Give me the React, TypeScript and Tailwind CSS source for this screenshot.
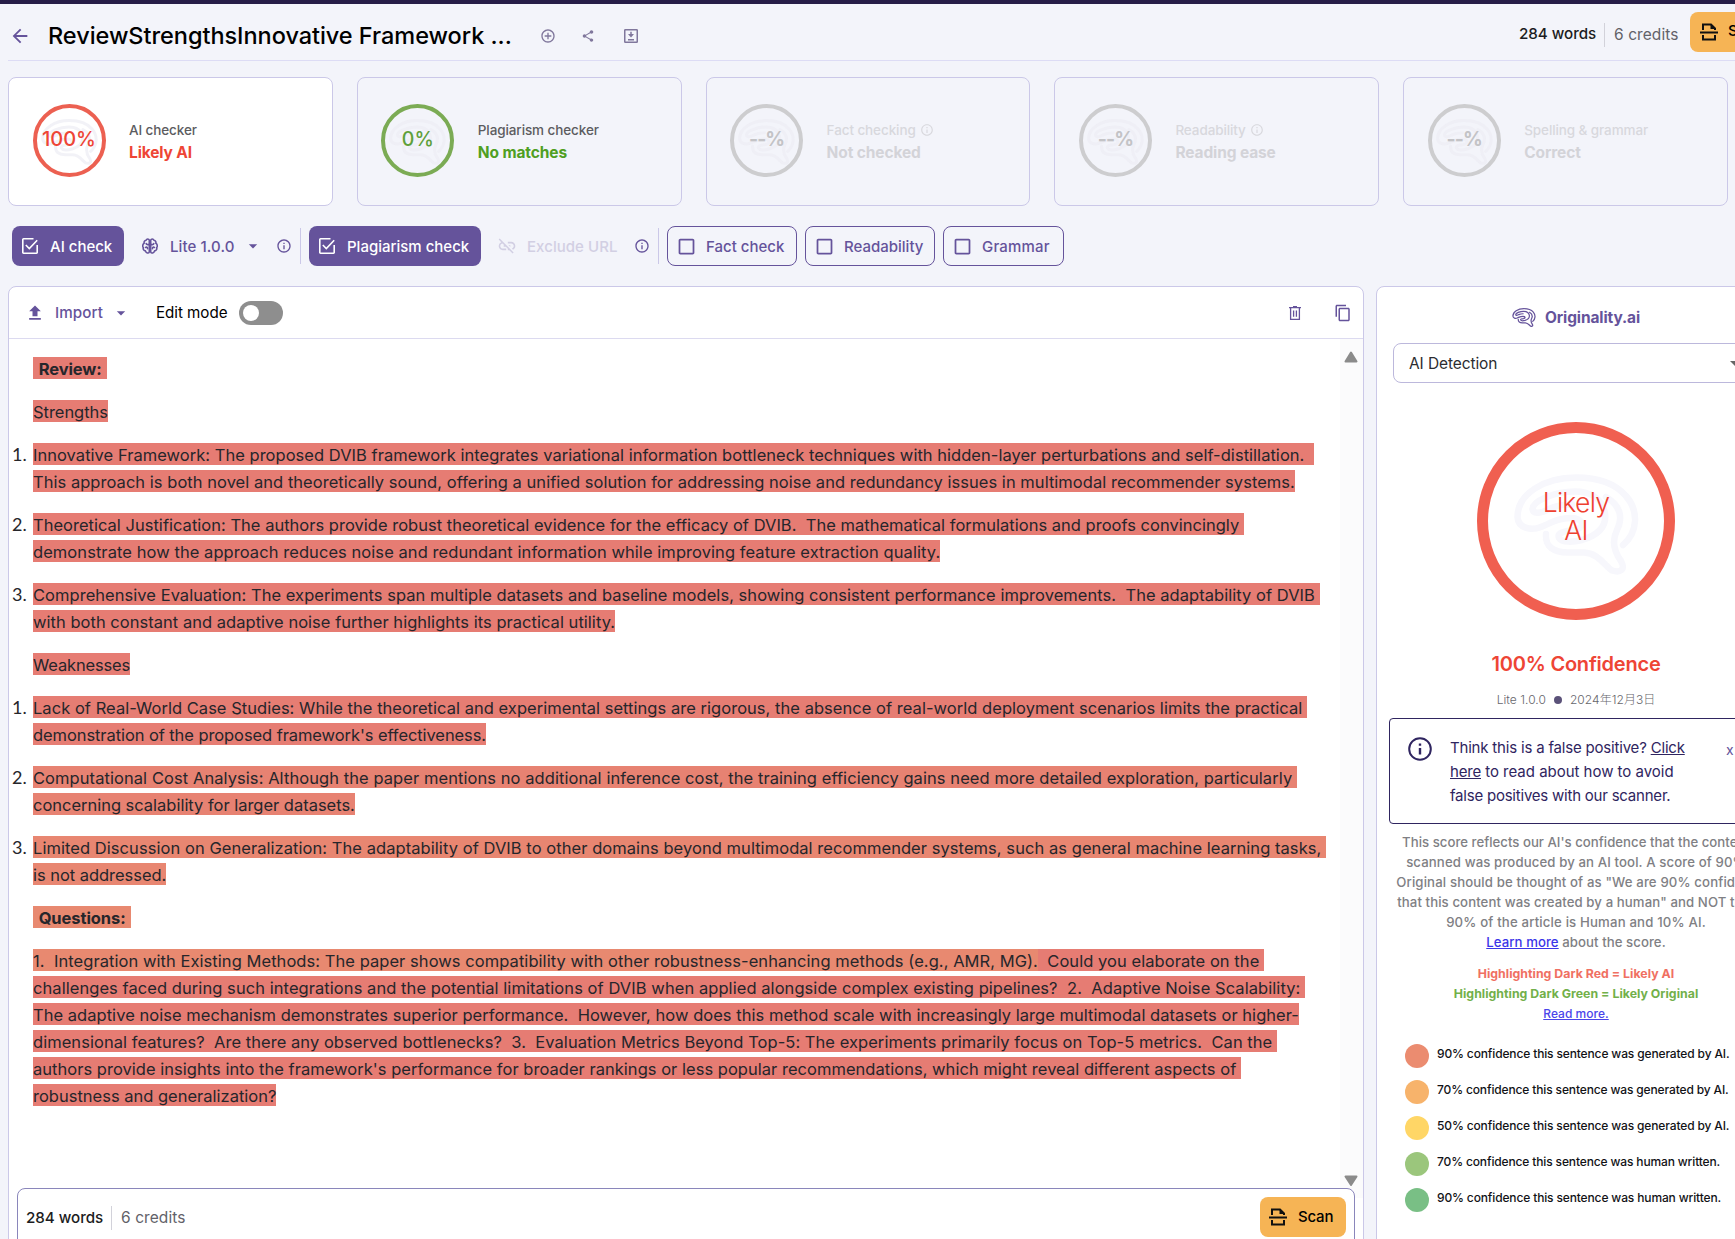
import type { ReactNode } from "react";
import { MdArrowBack, MdShare, MdUpload, MdContentCopy, MdArrowDropDown, MdLinkOff, MdOutlineInfo, MdCheckBoxOutlineBlank, MdAddCircleOutline } from "react-icons/md";

function BrainMark({ className }: { className: string }) {
  return (
    <svg viewBox="0 0 125 101" fill="none" stroke="currentColor" strokeWidth="6.5" strokeLinecap="round" strokeLinejoin="round" className={className}>
      <path d="M109 71C124 58 125 37 112 22C100 8 80 3.500 62 3.500C30 3.500 3.500 20 3.500 43C4 54 17 57 27 53C39 48 45 44 57 44C70 44 72 54 60 56C50 57 43 59 45 64C48 69 60 68 68 66C84 61 93 52 91 39C88 24 76 17.500 61 17.500C40 17.500 19 27 18.500 35C19 41 28 39 35 35C43 31 50 30.500 58 30.500" />
      <path d="M32 60C31 73 40 78.500 54 78.500H70C84 79 90 91 98 96.500C106 99 112 96 107 87C99 76 98 66 103 56C109 44 107 32 92 23" />
    </svg>
  );
}

function ScanIcon() {
  return (
    <svg viewBox="0 0 20 20" fill="none" stroke="#111" strokeWidth="2" className="size-5 shrink-0">
      <path d="M4 8V2.500H12L16 6.500V8" />
      <path d="M11.500 2V7H16.500Z" fill="#111" stroke="none" />
      <path d="M1 10.500H19" />
      <path d="M4 13V17.500H16V13" />
    </svg>
  );
}

function CheckedIcon() {
  return (
    <svg viewBox="0 0 16 16" fill="none" stroke="currentColor" strokeWidth="1.600" className="size-4 shrink-0">
      <path d="M11.500 .8H1.500A.7 .7 0 0 0 .8 1.500V14.500A.7 .7 0 0 0 1.500 15.200H14.500A.7 .7 0 0 0 15.200 14.500V7" />
      <path d="M3.800 7L7.300 10.500L15.200 2.300" />
    </svg>
  );
}

function BrainIcon() {
  return (
    <svg viewBox="0 0 16 16" fill="none" stroke="#65539b" strokeWidth="1.600" strokeLinecap="round" strokeLinejoin="round" className="size-4 shrink-0">
      <path d="M7.300 2C6.800.7 4.700.5 4.100 2.200C2.400 2.400 1.800 4 2.200 5.200C.6 6 .3 8.400 1.300 9.600C.9 11.400 2 12.800 3.400 12.900C4 15.300 6.600 15.700 7.300 14Z" />
      <path d="M8.700 2C9.200.7 11.300.5 11.900 2.200C13.600 2.400 14.200 4 13.800 5.200C15.400 6 15.700 8.400 14.700 9.600C15.100 11.400 14 12.800 12.600 12.900C12 15.300 9.400 15.700 8.700 14Z" />
      <path d="M4.200 5.500C4.400 6.600 5.600 6.800 7 6.400M3.500 9.500C4.500 8.700 5.500 9.300 5.500 10.800M11.800 5.500C11.600 6.600 10.400 6.800 9 6.400M12.500 9.500C11.500 8.700 10.500 9.300 10.500 10.800" />
    </svg>
  );
}

function TrashIcon() {
  return (
    <svg viewBox="0 0 12 14" fill="none" stroke="#65539b" strokeWidth="1.300" className="h-[14px] w-3">
      <path d="M0 1.700H12M4 .6H8M1.600 2V13.300H10.400V2M4.600 4.500V10.800M7.400 4.500V10.800" />
    </svg>
  );
}

function SaveBoxIcon() {
  return (
    <svg viewBox="0 0 14 14" fill="none" stroke="#80779c" strokeWidth="1.500" className="size-[14px]">
      <rect x=".75" y=".75" width="12.500" height="12.500" rx=".6" />
      <path d="M4 10.700H10M7 2.800V5.500" />
      <path d="M4 5H10L7 8.500Z" fill="#80779c" stroke="none" />
    </svg>
  );
}

type Check = { value: string; label: string; status: string; info?: boolean; card: string; ring: string; valueTone: string; labelTone: string; statusTone: string; valueSize: string };

const off = {
  card: "", ring: "border-[#cdcdcf]", valueTone: "text-[#c3c3c6] font-bold tracking-[-0.900px]",
  labelTone: "text-[#d8d8dd]", statusTone: "text-[#d3d3d8]", valueSize: "text-[19.5px]",
};
const checks: Check[] = [
  { value: "100%", label: "AI checker", status: "Likely AI", card: "bg-white", ring: "border-[#ec6051]", valueTone: "text-[#ee4535] font-medium", labelTone: "text-[#5c5c60]", statusTone: "text-[#ee4535]", valueSize: "text-[20px]" },
  { value: "0%", label: "Plagiarism checker", status: "No matches", card: "", ring: "border-[#7bab54]", valueTone: "text-[#5ea03a] font-medium", labelTone: "text-[#5c5c60]", statusTone: "text-[#4f9f22]", valueSize: "text-[19.5px]" },
  { value: "--%", label: "Fact checking", status: "Not checked", info: true, ...off },
  { value: "--%", label: "Readability", status: "Reading ease", info: true, ...off },
  { value: "--%", label: "Spelling & grammar", status: "Correct", ...off },
];

function CheckCard({ c }: { c: Check }) {
  return (
    <div className={`flex h-[129px] rounded-lg border border-[#cbc8e8] pl-[23.500px] ${c.card}`}>
      <div className={`relative mt-[26px] flex size-[73px] shrink-0 justify-center rounded-full border-4 ${c.ring}`}>
        <BrainMark className="absolute top-[11px] left-[4px] h-[46px] w-[57px] text-[#ececf4]/70" />
        <span className={`relative mt-[19px] leading-6 whitespace-nowrap ${c.valueTone} ${c.valueSize}`}>{c.value}</span>
      </div>
      <div className={`ml-[23.500px] whitespace-nowrap ${c.info ? "pt-[41px]" : "pt-[42px]"}`}>
        <div className={`flex items-center gap-1 text-[13.500px] font-medium tracking-[-0.100px] ${c.labelTone} ${c.info ? "h-[22px]" : "h-[21px]"}`}>
          {c.label}
          {c.info && <MdOutlineInfo className="size-[14px]" />}
        </div>
        <div className={`flex items-center text-[15.500px] font-bold tracking-[-0.120px] ${c.statusTone} ${c.info ? "h-6" : "h-[23px]"}`}>{c.status}</div>
      </div>
    </div>
  );
}

function ToggleButton({ label, className }: { label: string; className: string }) {
  return (
    <div className={`flex h-10 shrink-0 items-center rounded-lg border border-[#65539b] pl-2 text-[15px] font-medium text-[#65539b] ${className}`}>
      <MdCheckBoxOutlineBlank className="size-[21px] shrink-0" />
      <span className="mt-[2px] ml-[9px] whitespace-nowrap">{label}</span>
    </div>
  );
}

const red = "bg-[#e67c73]";
type Line = { t: string; k: string; bg?: string };
type Para = { n?: string; bold?: boolean; bg: string; lines: Line[] };

const paras: Para[] = [
  { bold: true, bg: red, lines: [{ t: " Review: ", k: "tracking-[-0.080px]" }] },
  { bg: red, lines: [{ t: "Strengths", k: "tracking-[-0.040px]" }] },
  { n: "1.", bg: red, lines: [
    { t: "Innovative Framework: The proposed DVIB framework integrates variational information bottleneck techniques with hidden-layer perturbations and self-distillation.  ", k: "tracking-[0.029px]" },
    { t: "This approach is both novel and theoretically sound, offering a unified solution for addressing noise and redundancy issues in multimodal recommender systems.", k: "tracking-[0.036px]" } ] },
  { n: "2.", bg: red, lines: [
    { t: "Theoretical Justification: The authors provide robust theoretical evidence for the efficacy of DVIB.  The mathematical formulations and proofs convincingly ", k: "tracking-[0.014px]" },
    { t: "demonstrate how the approach reduces noise and redundant information while improving feature extraction quality.", k: "tracking-[0.064px]" } ] },
  { n: "3.", bg: red, lines: [
    { t: "Comprehensive Evaluation: The experiments span multiple datasets and baseline models, showing consistent performance improvements.  The adaptability of DVIB ", k: "tracking-[0.041px]" },
    { t: "with both constant and adaptive noise further highlights its practical utility.", k: "tracking-[0.028px]" } ] },
  { bg: red, lines: [{ t: "Weaknesses", k: "tracking-[-0.160px]" }] },
  { n: "1.", bg: "bg-[#e67d73]", lines: [
    { t: "Lack of Real-World Case Studies: While the theoretical and experimental settings are rigorous, the absence of real-world deployment scenarios limits the practical ", k: "tracking-[0.036px]" },
    { t: "demonstration of the proposed framework's effectiveness.", k: "tracking-[-0.083px]" } ] },
  { n: "2.", bg: "bg-[#e78272]", lines: [
    { t: "Computational Cost Analysis: Although the paper mentions no additional inference cost, the training efficiency gains need more detailed exploration, particularly ", k: "tracking-[0.068px]" },
    { t: "concerning scalability for larger datasets.", k: "tracking-[-0.020px]" } ] },
  { n: "3.", bg: "bg-[#e88671]", lines: [
    { t: "Limited Discussion on Generalization: The adaptability of DVIB to other domains beyond multimodal recommender systems, such as general machine learning tasks, ", k: "tracking-[0.056px]" },
    { t: "is not addressed.", k: "tracking-[-0.040px]" } ] },
  { bold: true, bg: "bg-[#e88970]", lines: [{ t: " Questions: ", k: "tracking-[-0.080px]" }] },
  { bg: red, lines: [
    { t: "1.  Integration with Existing Methods: The paper shows compatibility with other robustness-enhancing methods (e.g., AMR, MG).|  Could you elaborate on the ", k: "tracking-[0.054px]", bg: "bg-[#e88970]" },
    { t: "challenges faced during such integrations and the potential limitations of DVIB when applied alongside complex existing pipelines?  2.  Adaptive Noise Scalability: ", k: "tracking-[0.062px]" },
    { t: "The adaptive noise mechanism demonstrates superior performance.  However, how does this method scale with increasingly large multimodal datasets or higher-", k: "tracking-[0.035px]" },
    { t: "dimensional features?  Are there any observed bottlenecks?  3.  Evaluation Metrics Beyond Top-5: The experiments primarily focus on Top-5 metrics.  Can the ", k: "tracking-[0.045px]" },
    { t: "authors provide insights into the framework's performance for broader rankings or less popular recommendations, which might reveal different aspects of ", k: "tracking-[0.026px]" },
    { t: "robustness and generalization?", k: "tracking-[0px]" } ] },
];

function Paragraph({ p }: { p: Para }) {
  return (
    <div className="mb-4 flex">
      <div className="w-6 shrink-0 pl-[3px] font-['Lato'] text-[18px] leading-[23px]">{p.n}</div>
      <div className={p.bold ? "font-bold [word-spacing:1.800px]" : ""}>
        {p.lines.map((l) => (
          <div key={l.t} className={`mb-[5px] flex h-[22px] text-[16.500px] leading-[24px] whitespace-pre ${l.k}`}>
            {l.t.split("|").map((part, i) => (
              <span key={part} className={i === 0 && l.bg ? l.bg : p.bg}>{part}</span>
            ))}
          </div>
        ))}
      </div>
    </div>
  );
}

const scoreLines = [
  { t: "This score reflects our AI's confidence that the content", k: "tracking-[0.015px]" },
  { t: "scanned was produced by an AI tool. A score of 90%", k: "tracking-[0.110px]" },
  { t: "Original should be thought of as \"We are 90% confident", k: "tracking-[0.130px]" },
  { t: "that this content was created by a human\" and NOT that", k: "tracking-[0.090px]" },
  { t: "90% of the article is Human and 10% AI.", k: "tracking-[0.160px]" },
];

const legend = [
  ["bg-[#eb8c70]", "90% confidence this sentence was generated by AI."],
  ["bg-[#f7b36b]", "70% confidence this sentence was generated by AI."],
  ["bg-[#ffd666]", "50% confidence this sentence was generated by AI."],
  ["bg-[#9bc67c]", "70% confidence this sentence was human written."],
  ["bg-[#79bf85]", "90% confidence this sentence was human written."],
];

function Counts({ children }: { children?: ReactNode }) {
  return (
    <div className="flex shrink-0 items-center whitespace-nowrap">
      <span className="w-[85px] text-[15.200px] font-medium tracking-[-0.050px] text-[#1c1c22]">284 words</span>
      <span className="h-6 w-px bg-[#d2d2da]" />
      <span className="ml-[9px] text-[15.500px] tracking-[0.080px] text-[#626269]">6 credits</span>
      {children}
    </div>
  );
}

export default function App() {
  return (
    <div className="h-[1239px] w-[1735px] overflow-hidden bg-[#f3f4fa] font-['Inter','Noto_Sans_CJK_SC',sans-serif] text-[#26262b]">
      <div className="h-1 bg-[#261d47]" />
      <header className="ml-2 flex h-[57px] items-center border-b border-[#dddcf5]">
        <MdArrowBack className="mt-2 size-6 shrink-0 p-[1px] text-[#65539b]" />
        <h1 className="mt-[8px] ml-[16px] w-[491px] shrink-0 text-[23.500px] leading-8 font-medium tracking-[-0.040px] whitespace-nowrap text-black">ReviewStrengthsInnovative Framework ...</h1>
        <div className="mt-2 flex w-[980px] shrink-0 items-center text-[#80779c]">
          <MdAddCircleOutline className="ml-[1px] size-4" />
          <MdShare className="ml-[25px] size-[14px]" />
          <div className="ml-[29px]"><SaveBoxIcon /></div>
        </div>
        <div className="mt-[5px] flex w-[171px] shrink-0 items-center"><Counts /></div>
        <div className="-mt-px flex h-10 w-[86px] shrink-0 items-center rounded-lg bg-[#f6b455] pl-[9px] text-[15px] font-medium text-black">
          <ScanIcon />
          <span className="ml-[9px]">Scan</span>
        </div>
      </header>

      <section className="mt-4 ml-2 grid w-[1720px] grid-cols-5 gap-6">
        {checks.map((c) => <CheckCard key={c.label} c={c} />)}
      </section>

      <section className="mt-5 ml-3 flex h-10 items-center text-[15px] font-medium whitespace-nowrap">
        <div className="flex h-10 w-[112px] shrink-0 items-center rounded-lg bg-[#65539b] pl-[10px] text-white">
          <CheckedIcon /><span className="mt-[2px] ml-3">AI check</span>
        </div>
        <div className="flex w-[176px] shrink-0 items-center pl-[18px] text-[#65539b]">
          <BrainIcon />
          <span className="mt-[2px] ml-3 w-[71px] tracking-[0.100px]">Lite 1.0.0</span>
          <MdArrowDropDown className="ml-[2px] size-5" />
          <MdOutlineInfo className="ml-[13px] size-4" />
        </div>
        <div className="h-9 w-px bg-[#cbc8e8]" />
        <div className="ml-2 flex h-10 w-[172px] shrink-0 items-center rounded-lg bg-[#65539b] pl-[10px] text-white">
          <CheckedIcon /><span className="mt-[2px] ml-3">Plagiarism check</span>
        </div>
        <div className="flex w-[177px] shrink-0 items-center pl-4 text-[#d2cfe3]">
          <MdLinkOff className="size-5" />
          <span className="mt-[2px] ml-[10px] w-[92px] tracking-[0.050px]">Exclude URL</span>
          <MdOutlineInfo className="ml-[15px] size-4 text-[#65539b]" />
        </div>
        <div className="h-9 w-px bg-[#cbc8e8]" />
        <div className="ml-2 flex gap-2">
          <ToggleButton label="Fact check" className="w-[130px]" />
          <ToggleButton label="Readability" className="w-[130px]" />
          <ToggleButton label="Grammar" className="w-[121px] tracking-[0.200px]" />
        </div>
      </section>

      <main className="mt-5 ml-2 flex gap-3">
        <section className="flex h-[970px] w-[1356px] shrink-0 flex-col rounded-lg border border-[#cbc8e8] bg-white">
          <div className="flex h-[52px] shrink-0 items-center border-b border-[#dcdaf0] text-[15.200px] whitespace-nowrap">
            <MdUpload className="ml-4 size-5 text-[#65539b]" />
            <span className="mt-[2px] ml-[10px] w-[51px] font-medium tracking-[0.100px] text-[#65539b]">Import</span>
            <MdArrowDropDown className="ml-[5px] size-5 text-[#65539b]" />
            <span className="mt-[2px] ml-[25px] w-[83px] tracking-[-0.050px] text-black">Edit mode</span>
            <div className="flex h-6 w-11 items-center rounded-full bg-[#8e8e8e] pl-1"><div className="size-4 rounded-full bg-white" /></div>
            <div className="mr-[11px] ml-auto flex items-center gap-[33px]">
              <TrashIcon />
              <MdContentCopy className="size-[18px] text-[#65539b]" />
            </div>
          </div>
          <div className="flex h-[849px] shrink-0">
            <div className="min-w-0 flex-1 pt-[18px]">
              {paras.map((p, i) => <Paragraph key={i} p={p} />)}
            </div>
            <div className="flex h-[859px] w-[23px] shrink-0 flex-col items-center justify-between bg-[#fbfbfc] pt-[12px] pr-px pb-[11px]">
              <svg viewBox="0 0 14 12" className="h-3 w-[14px]"><path d="M7 1.500L12.500 10.500H1.500Z" fill="#8b8b8b" stroke="#8b8b8b" strokeWidth="2" strokeLinejoin="round" /></svg>
              <svg viewBox="0 0 14 12" className="h-3 w-[14px]"><path d="M1.500 1.500H12.500L7 10Z" fill="#8b8b8b" stroke="#8b8b8b" strokeWidth="2" strokeLinejoin="round" /></svg>
            </div>
          </div>
          <div className="relative mx-2 flex h-[80px] shrink-0 items-start justify-between rounded-lg border border-[#8a86bb] bg-white pr-2 pl-2">
            <div className="mt-[17px]"><Counts /></div>
            <div className="mt-2 flex h-10 w-[86px] items-center rounded-lg bg-[#f6b455] pl-[8px] text-[15px] font-medium text-black">
              <ScanIcon />
              <span className="ml-[10px] tracking-[-0.200px]">Scan</span>
            </div>
          </div>
        </section>

        <aside className="flex h-[970px] w-[400px] shrink-0 flex-col items-center rounded-lg border border-[#cbc8e8] bg-white whitespace-nowrap">
          <div className="mt-[18px] flex h-6 items-center gap-2">
            <BrainMark className="mr-[1px] h-[19px] w-6 text-[#65539b]" />
            <span className="mt-[2px] text-[15.500px] font-bold tracking-[-0.120px] text-[#65539b]">Originality.ai</span>
          </div>
          <div className="mt-[14px] flex h-10 w-[366px] items-center justify-between rounded-lg border border-[#bcb8dc] pl-[15px] text-[15.500px] tracking-[-0.100px] text-[#2c2c30]">
            <span className="mt-[2px]">AI Detection</span>
            <MdArrowDropDown className="mr-[11px] size-6 text-[#666]" />
          </div>
          <div className="relative mt-[39px] flex size-[198px] shrink-0 flex-col items-center justify-center rounded-full border-[11px] border-[#f05f50]">
            <BrainMark className="absolute top-[41px] left-[26px] h-[101px] w-[125px] text-[#f7f7fc]" />
            <div className="relative -mt-[11px] text-center text-[26.500px] leading-7 font-light tracking-[-0.700px] text-[#ee4030]">Likely<br />AI</div>
          </div>
          <div className="mt-[32px] text-[20px] leading-6 font-semibold tracking-[-0.220px] text-[#ee4535]">100% Confidence</div>
          <div className="mt-[14px] flex h-5 items-center text-[12px] font-light tracking-[0.050px] text-[#66666c]">
            Lite 1.0.0<span className="mx-[8px] size-2 rounded-full bg-[#5b5279]" />2024年12月3日
          </div>
          <div className="mt-[8px] flex h-[106px] w-[374px] shrink-0 rounded border border-[#2f2560] text-[#2f2560]">
            <svg viewBox="0 0 24 24" fill="none" stroke="currentColor" strokeWidth="2" className="mt-[18px] ml-[18px] size-6 shrink-0">
              <circle cx="12" cy="12" r="10.800" /><path d="M12 11V17.500M12 6.500V8.800" strokeWidth="2.400" />
            </svg>
            <div className="mt-[17px] ml-[18px] w-[276px] text-[15px] leading-6 tracking-[-0.190px]">
              Think this is a false positive? <a className="underline">Click</a><br />
              <a className="underline">here</a><span className="tracking-[-0.020px]"> to read about how to avoid</span><br />
              <span className="tracking-[-0.220px]">false positives with our scanner.</span>
            </div>
            <span className="mt-[20px] text-[14px] text-[#65539b]">x</span>
          </div>
          <div className="mt-[8px] text-center text-[13.200px] leading-5 font-medium text-[#808084]">
            {scoreLines.map((l) => <div key={l.t} className={l.k}>{l.t}</div>)}
            <div className="tracking-[0.060px]"><a className="text-[#3b35e8] underline">Learn more</a> about the score.</div>
          </div>
          <div className="mt-[12px] text-center text-[12.300px] leading-5 font-bold tracking-[0.030px]">
            <div className="text-[#f07062]">Highlighting Dark Red = Likely AI</div>
            <div className="text-[#72b04a]">Highlighting Dark Green = Likely Original</div>
            <div className="text-[12px] font-medium text-[#4a45ea] underline">Read more.</div>
          </div>
          <div className="mt-[20px] flex w-[342px] flex-col gap-3">
            {legend.map(([bg, t]) => (
              <div key={t} className="flex h-6 items-center">
                <span className={`size-6 rounded-full ${bg}`} />
                <span className="-mt-1 ml-2 text-[12px] font-medium tracking-[-0.140px] text-[#121216]">{t}</span>
              </div>
            ))}
          </div>
        </aside>
      </main>
    </div>
  );
}
